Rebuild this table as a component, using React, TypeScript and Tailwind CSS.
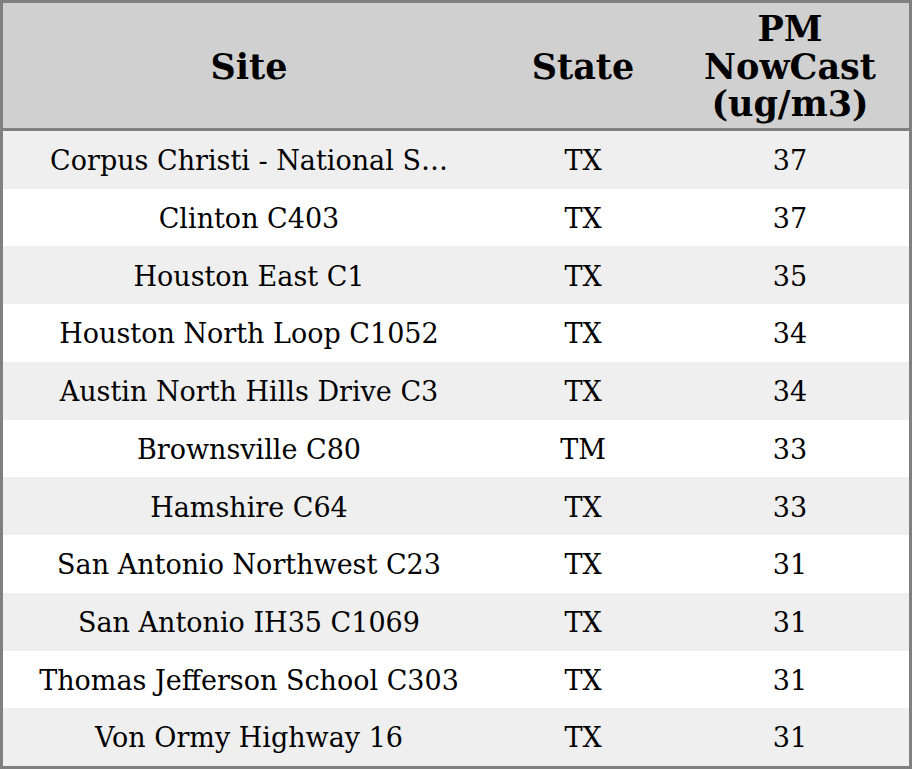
const rows: [string, string, string][] = [
  ["Corpus Christi - National S…", "TX", "37"],
  ["Clinton C403", "TX", "37"],
  ["Houston East C1", "TX", "35"],
  ["Houston North Loop C1052", "TX", "34"],
  ["Austin North Hills Drive C3", "TX", "34"],
  ["Brownsville C80", "TM", "33"],
  ["Hamshire C64", "TX", "33"],
  ["San Antonio Northwest C23", "TX", "31"],
  ["San Antonio IH35 C1069", "TX", "31"],
  ["Thomas Jefferson School C303", "TX", "31"],
  ["Von Ormy Highway 16", "TX", "31"],
];

export default function App() {
  return (
    <div
      className="flex h-[769px] w-[912px] flex-col border-[3px] border-[#808080] bg-white text-black"
      style={{ fontFamily: '"DejaVu Serif", "Liberation Serif", serif' }}
    >
      <div className="grid h-[128px] shrink-0 grid-cols-[492px_176px_1fr] items-center border-b-[3px] border-[#808080] bg-[#d0d0d0] pt-[2px] text-[35px] font-bold leading-[37.5px]">
        <div className="text-center">Site</div>
        <div className="text-center">State</div>
        <div className="text-center">
          PM
          <br />
          NowCast
          <br />
          (ug/m3)
        </div>
      </div>
      <div className="flex flex-1 flex-col">
        {rows.map(([site, state, pm], i) => (
          <div
            key={site}
            className={`grid flex-1 grid-cols-[492px_176px_1fr] items-center pt-[3px] text-[27px] ${
              i % 2 === 0 ? "bg-[#efefef]" : "bg-white"
            }`}
          >
            <div className="whitespace-nowrap text-center">{site}</div>
            <div className="text-center">{state}</div>
            <div className="text-center">{pm}</div>
          </div>
        ))}
      </div>
    </div>
  );
}
